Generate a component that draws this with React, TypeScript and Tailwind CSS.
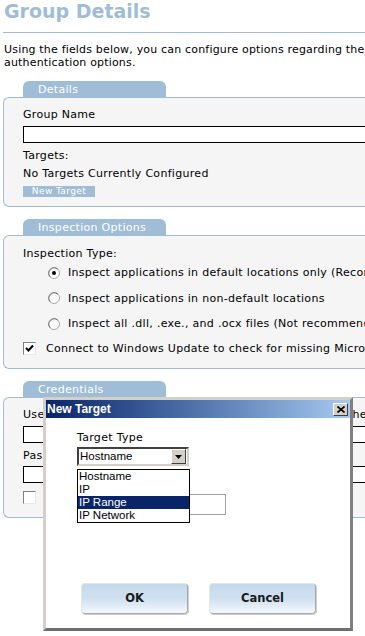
import React from 'react';

const Tab = ({ label }: { label: string }) => (
  <div className="ml-[23px] flex h-[16px] w-[143px] items-center rounded-t-[6px] bg-[#9fbdd7] pl-[15px] text-[11px] leading-none tracking-[0.3px] text-white">
    {label}
  </div>
);

const Radio = ({ checked }: { checked?: boolean }) => (
  <svg width="12" height="12" viewBox="0 0 12 12" className="shrink-0">
    <circle cx="6" cy="6" r="5.5" fill="#fff" stroke="#a8a8a8" />
    <path d="M2.2 9.8 A5.4 5.4 0 0 1 9.8 2.2" fill="none" stroke="#777" strokeWidth="1" />
    {checked && <circle cx="6" cy="6" r="2" fill="#000" />}
  </svg>
);

const Checkbox = ({ checked }: { checked?: boolean }) => (
  <div className="flex h-[13px] w-[13px] shrink-0 items-center justify-center border border-b-[#e8e8e8] border-l-[#808080] border-r-[#e8e8e8] border-t-[#808080] bg-white">
    {checked && (
      <svg width="9" height="9" viewBox="0 0 9 9">
        <path d="M1 4 L3.5 6.5 L8 1.5" fill="none" stroke="#000" strokeWidth="2" />
      </svg>
    )}
  </div>
);

const TextBox = ({ className }: { className: string }) => (
  <div className={`h-[17px] border border-black bg-white ${className}`} />
);

export default function App() {
  return (
    <div className="relative h-[636px] w-[365px] overflow-hidden bg-white font-['DejaVu_Sans',sans-serif] text-black">
      <div className="w-[720px]">
        {/* Header */}
        <h1 className="pl-[4px] text-[19px] font-bold leading-[23px] text-[#9fbdd7]">Group Details</h1>
        <div className="ml-[3px] mt-[9px] h-px bg-[#9fbdd7]" />
        <p className="mt-[10px] whitespace-nowrap pl-[4px] text-[11px] leading-[13px] tracking-[0.18px]">
          Using the fields below, you can configure options regarding the
          <br />
          authentication options.
        </p>

        {/* Details */}
        <div className="mt-[12px]">
          <Tab label="Details" />
          <div className="ml-[3px] h-[110px] rounded-l-[6px] border border-r-0 border-[#9fbdd7] bg-[#f5f5f5] pl-[19px] pt-[10px] text-[11px] leading-[13px] tracking-[0.3px]">
            <div>Group Name</div>
            <TextBox className="mt-[5px] w-[600px]" />
            <div className="mt-[6px]">Targets:</div>
            <div className="mt-[5px]">No Targets Currently Configured</div>
            <div className="mt-[6px] flex h-[11px] w-[72px] items-center justify-center bg-[#9fbdd7] text-[9px] leading-none tracking-[0.4px] text-white">
              New Target
            </div>
          </div>
        </div>

        {/* Inspection Options */}
        <div className="mt-[12px]">
          <Tab label="Inspection Options" />
          <div className="ml-[3px] h-[134px] rounded-l-[6px] border border-r-0 border-[#9fbdd7] bg-[#f5f5f5] pl-[19px] pt-[11px] text-[11px] leading-[13px] tracking-[0.3px]">
            <div>Inspection Type:</div>
            <div className="flex h-[25px] items-center gap-[8px] whitespace-nowrap pl-[25px]">
              <Radio checked />
              <span>Inspect applications in default locations only (Recommended)</span>
            </div>
            <div className="flex h-[26px] items-center gap-[8px] whitespace-nowrap pl-[25px]">
              <Radio />
              <span>Inspect applications in non-default locations</span>
            </div>
            <div className="flex h-[25px] items-center gap-[8px] whitespace-nowrap pl-[25px]">
              <Radio />
              <span>Inspect all .dll, .exe., and .ocx files (Not recommended)</span>
            </div>
            <div className="flex h-[24px] items-center gap-[10px] whitespace-nowrap">
              <Checkbox checked />
              <span>Connect to Windows Update to check for missing Microsoft updates</span>
            </div>
          </div>
        </div>

        {/* Credentials */}
        <div className="mt-[12px]">
          <Tab label="Credentials" />
          <div className="ml-[3px] h-[121px] rounded-l-[6px] border border-r-0 border-[#9fbdd7] bg-[#f5f5f5] pl-[19px] pt-[10px] text-[11px] leading-[13px] tracking-[0.3px]">
            <div className="flex gap-[4px]">
              <div className="w-[312px]">
                <div>User Name</div>
                <TextBox className="mt-[5px]" />
                <div className="mt-[6px]">Password</div>
                <TextBox className="mt-[4px]" />
              </div>
              <div className="w-[300px]">
                <div>Other</div>
                <TextBox className="mt-[5px]" />
                <div className="mt-[6px]">&nbsp;</div>
                <TextBox className="mt-[4px]" />
              </div>
            </div>
            <div className="mt-[8px] flex items-center gap-[10px]">
              <Checkbox />
              <span>Save credentials</span>
            </div>
          </div>
        </div>
      </div>

      {/* New Target dialog */}
      <div className="absolute left-[43px] top-[397px] flex h-[234px] w-[310px] flex-col border-[3px] border-b-[#6f6f6f] border-l-[#d4d0c8] border-r-[#808080] border-t-[#d4d0c8] bg-white">
        <div className="flex h-[18px] shrink-0 items-center justify-between bg-gradient-to-r from-[#0a246a] to-[#a6caf0] pl-[1px] pr-[2px]">
          <span className="font-['Liberation_Sans',sans-serif] text-[12px] font-bold leading-none text-white">New Target</span>
          <div className="flex h-[13px] w-[15px] items-center justify-center border border-b-[#404040] border-l-white border-r-[#404040] border-t-white bg-[#d4d0c8]">
            <svg width="8" height="7" viewBox="0 0 8 7">
              <path d="M0.5 0.5 L7.5 6.5 M7.5 0.5 L0.5 6.5" stroke="#000" strokeWidth="1.6" />
            </svg>
          </div>
        </div>

        <div className="relative flex-1 pl-[31px] pt-[13px]">
          <div className="text-[11px] leading-[13px] tracking-[0.3px]">Target Type</div>
          <div className="mt-[3px] flex h-[19px] w-[112px] items-center justify-between border-2 border-b-[#d4d0c8] border-l-[#404040] border-r-[#d4d0c8] border-t-[#404040] bg-white pl-[1px] pr-[1px]">
            <span className="font-['Liberation_Sans',sans-serif] text-[11.5px] leading-none">Hostname</span>
            <div className="flex h-[15px] w-[15px] items-center justify-center border border-b-[#404040] border-l-white border-r-[#404040] border-t-white bg-[#d4d0c8]">
              <svg width="7" height="4" viewBox="0 0 7 4">
                <path d="M0 0 H7 L3.5 4 Z" fill="#000" />
              </svg>
            </div>
          </div>
          <div className="mt-[28px] h-[21px] w-[149px] border border-[#a0a0a0] bg-white" />

          <div className="flex gap-[21px] pl-[4px] pt-[68px]">
            <button className="h-[31px] w-[107px] rounded-[4px] border border-b-[#a8a8a8] border-l-[#e6e6e6] border-r-[#a8a8a8] border-t-[#e6e6e6] bg-gradient-to-b from-[#c6d9ec] via-[#cfe0f0] to-[#f4f8fb] text-[11.5px] font-bold text-[#1a1a1a] shadow-[1px_1px_0_#d0d0d0]">
              OK
            </button>
            <button className="h-[31px] w-[107px] rounded-[4px] border border-b-[#a8a8a8] border-l-[#e6e6e6] border-r-[#a8a8a8] border-t-[#e6e6e6] bg-gradient-to-b from-[#c6d9ec] via-[#cfe0f0] to-[#f4f8fb] text-[11.5px] font-bold text-[#1a1a1a] shadow-[1px_1px_0_#d0d0d0]">
              Cancel
            </button>
          </div>

          {/* open select list */}
          <div className="absolute left-[31px] top-[51px] w-[113px] border border-black bg-white font-['Liberation_Sans',sans-serif] text-[11.5px]">
            <div className="h-[13px] pl-[1px] leading-[13px]">Hostname</div>
            <div className="h-[13px] pl-[1px] leading-[13px]">IP</div>
            <div className="h-[13px] bg-[#0a246a] pl-[1px] leading-[13px] text-white">IP Range</div>
            <div className="h-[13px] pl-[1px] leading-[13px]">IP Network</div>
          </div>
        </div>
      </div>
    </div>
  );
}
